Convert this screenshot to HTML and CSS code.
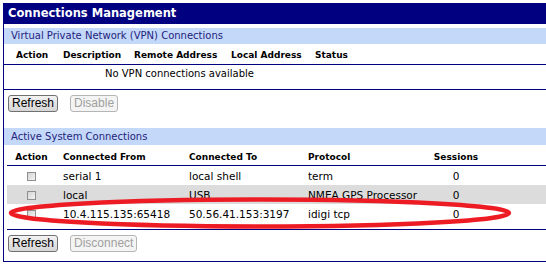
FILE: index.html
```html
<!DOCTYPE html>
<html lang="en">
<head>
  <meta charset="UTF-8" />
  <title>Connections Management</title>
  <link rel="stylesheet" href="styles.css">
</head>
<body>
  <div class="panel">
    <div class="title">Connections Management</div>

    <!-- VPN connections -->
    <div class="bar">Virtual Private Network (VPN) Connections</div>
    <div class="vpn-table">
      <div class="row head">
        <span class="c-action">Action</span>
        <span>Description</span>
        <span>Remote Address</span>
        <span>Local Address</span>
        <span>Status</span>
        <span></span>
      </div>
      <div class="empty">No VPN connections available</div>
    </div>
    <div class="buttons">
      <button class="btn">Refresh</button>
      <button class="btn" disabled>Disable</button>
    </div>

    <!-- Active system connections -->
    <div class="bar bar-active">Active System Connections</div>
    <div class="conn-table">
      <div class="row head">
        <span class="c-action">Action</span>
        <span>Connected From</span>
        <span>Connected To</span>
        <span>Protocol</span>
        <span class="c-num">Sessions</span>
        <span></span>
      </div>
      <div class="row">
        <span class="c-action"><i class="check"></i></span>
        <span>serial 1</span>
        <span>local shell</span>
        <span>term</span>
        <span class="c-num">0</span>
        <span></span>
      </div>
      <div class="row alt">
        <span class="c-action"><i class="check"></i></span>
        <span>local</span>
        <span>USB</span>
        <span>NMEA GPS Processor</span>
        <span class="c-num">0</span>
        <span></span>
      </div>
      <div class="row">
        <span class="c-action"><i class="check"></i></span>
        <span>10.4.115.135:65418</span>
        <span>50.56.41.153:3197</span>
        <span>idigi tcp</span>
        <span class="c-num">0</span>
        <span></span>
      </div>
    </div>
    <div class="buttons">
      <button class="btn">Refresh</button>
      <button class="btn" disabled>Disconnect</button>
    </div>
  </div>

  <!-- hand drawn highlight -->
  <svg class="marker" width="546" height="273" viewBox="0 0 546 273">
    <ellipse cx="260" cy="213" rx="249" ry="13.5" fill="none" stroke="#ed1c24" stroke-width="4.5" />
  </svg>
</body>
</html>
```

FILE: styles.css
```css
* { box-sizing: border-box; }
body {
  margin: 0;
  padding: 3px 0 0 3px;
  font-family: "DejaVu Sans", Verdana, sans-serif;
  font-size: 10px;
  color: #000;
  background: #fff;
  overflow: hidden;
  position: relative;
  width: 546px;
  height: 273px;
}

/* Outer panel */
.panel {
  width: 543px;
  height: 259px;
  border-left: 1px solid #000080;
  border-bottom: 1px solid #000080;
}
.title {
  height: 21px;
  line-height: 21px;
  padding-left: 4px;
  background: #000080;
  color: #fff;
  font-size: 11.5px;
  font-weight: bold;
}

/* Section bars */
.bar {
  margin-top: 4px;
  height: 16px;
  line-height: 16px;
  padding-left: 7px;
  background: #c4d8fa;
  color: #23237a;
}
.bar-active { margin-top: 16px; height: 17px; line-height: 17px; }

/* Tables */
.row {
  display: grid;
  align-items: center;
}
.vpn-table .row { grid-template-columns: 52px 71px 97px 84px 48px 1fr; }
.conn-table { margin-left: 3px; padding-bottom: 6px; border-bottom: 1px solid #000080; }
.conn-table .row { grid-template-columns: 49px 126px 119px 120px 70px 1fr; height: 19px; font-size: 10.5px; }
.row span { white-space: nowrap; }
.row span:not(.c-action):not(.c-num) { padding-left: 7px; }
.row.head {
  height: 21px;
  padding-top: 6px;
  border-bottom: 1px solid #000080;
  font-size: 9px;
  font-weight: bold;
  align-items: start;
}
.conn-table .row.head { height: 21px; padding-top: 7px; font-size: 9px; }
.row.alt { background: #dcdcdc; }
.c-action, .c-num { text-align: center; }
.vpn-table .row.head .c-action { text-align: left; padding-left: 12px; }

.empty {
  height: 25px;
  padding: 2px 0 0 101px;
  line-height: 14px;
  border-bottom: 1px solid #000080;
}

/* Checkbox */
.check {
  display: inline-block;
  width: 9px;
  height: 9px;
  margin-top: 3px;
  border: 1px solid #8e8f8f;
  background: linear-gradient(135deg, #d4d4d4, #f4f4f4);
}

/* Buttons */
.buttons {
  display: flex;
  gap: 12px;
  margin: 5px 0 0 4px;
}
.btn {
  height: 17px;
  padding: 0 3px;
  font-family: "Liberation Sans", Arial, sans-serif;
  font-size: 12px;
  line-height: 15px;
  color: #000;
  border: 1px solid #707070;
  border-radius: 3px;
  background: linear-gradient(#f3f3f3, #e3e3e3 50%, #d6d6d6);
}
.btn:disabled {
  color: #a0a0a0;
  border-color: #b5b5b5;
  background: #f4f4f4;
}

/* Highlight overlay */
.marker {
  position: absolute;
  top: 0;
  left: 0;
  pointer-events: none;
}
```
